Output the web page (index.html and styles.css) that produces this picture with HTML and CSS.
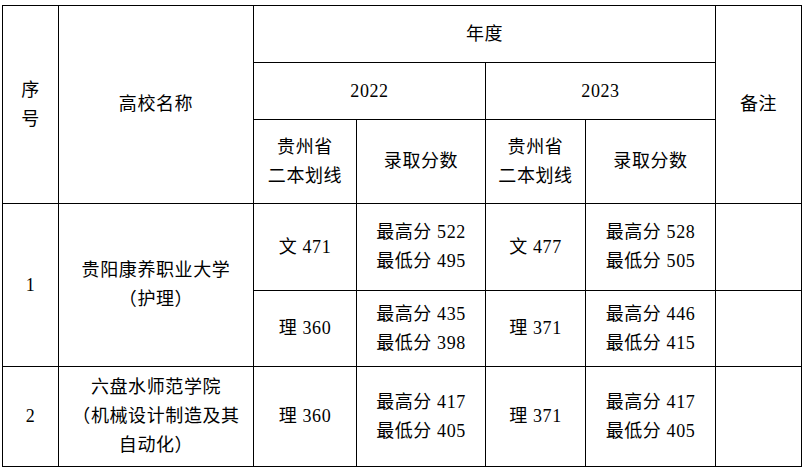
FILE: index.html
```html
<!DOCTYPE html>
<html lang="zh-CN">
<head>
<meta charset="utf-8">
<title>录取分数</title>
<link rel="stylesheet" href="styles.css">
</head>
<body>
<table class="score-table">
  <colgroup>
    <col class="c-no">
    <col class="c-name">
    <col class="c-line">
    <col class="c-score">
    <col class="c-line2">
    <col class="c-score2">
    <col class="c-note">
  </colgroup>
  <tbody>
    <tr class="r-h1">
      <td rowspan="3">序<br>号</td>
      <td rowspan="3">高校名称</td>
      <td colspan="4">年度</td>
      <td rowspan="3">备注</td>
    </tr>
    <tr class="r-h2">
      <td colspan="2">2022</td>
      <td colspan="2">2023</td>
    </tr>
    <tr class="r-h3">
      <td>贵州省<br>二本划线</td>
      <td>录取分数</td>
      <td>贵州省<br>二本划线</td>
      <td>录取分数</td>
    </tr>
    <tr class="r-d1">
      <td rowspan="2">1</td>
      <td rowspan="2" class="name1">贵阳康养职业大学<br>（护理）</td>
      <td>文 471</td>
      <td>最高分 522<br>最低分 495</td>
      <td>文 477</td>
      <td>最高分 528<br>最低分 505</td>
      <td></td>
    </tr>
    <tr class="r-d2">
      <td>理 360</td>
      <td>最高分 435<br>最低分 398</td>
      <td>理 371</td>
      <td>最高分 446<br>最低分 415</td>
      <td></td>
    </tr>
    <tr class="r-d3">
      <td>2</td>
      <td>六盘水师范学院<br>（机械设计制造及其<br>自动化）</td>
      <td>理 360</td>
      <td>最高分 417<br>最低分 405</td>
      <td>理 371</td>
      <td>最高分 417<br>最低分 405</td>
      <td></td>
    </tr>
  </tbody>
</table>
</body>
</html>
```

FILE: styles.css
```css
html, body {
  background: #ffffff;
}

body {
  margin: 5px 0 0 2px;
  font-family: "Liberation Serif", "Noto Sans CJK SC", serif;
  font-size: 18px;
  color: #000000;
}

.score-table {
  border-collapse: collapse;
  table-layout: fixed;
  width: 799px;
}

.score-table td {
  border: 1px solid #000000;
  padding: 0;
  text-align: center;
  vertical-align: middle;
  line-height: 29px;
  letter-spacing: 0.6px;
}

.c-no { width: 56px; }
.c-name { width: 195px; }
.c-line { width: 103px; }
.c-score { width: 129px; }
.c-line2 { width: 100px; }
.c-score2 { width: 130px; }
.c-note { width: 86px; }

.r-h1 { height: 57px; }
.r-h2 { height: 57px; }
.r-h3 { height: 84px; }
.r-d1 { height: 87px; }
.r-d2 { height: 76px; }
.r-d3 { height: 100px; }

.name1 {
  line-height: 27px;
}
```
